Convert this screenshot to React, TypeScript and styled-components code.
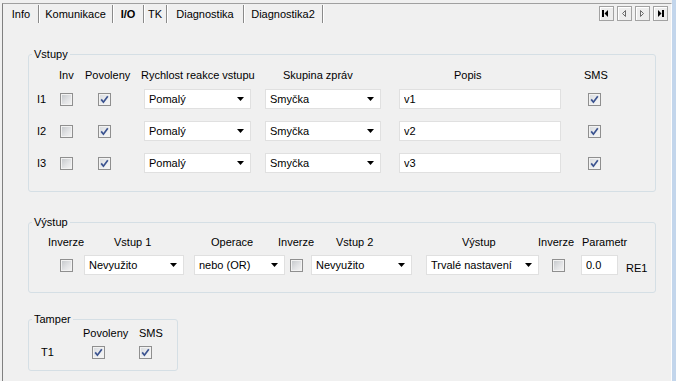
import React from 'react'
import styled, { createGlobalStyle } from 'styled-components'

const GlobalStyle = createGlobalStyle`
  html, body {
    margin: 0;
    padding: 0;
    background: #f0f0f0;
  }
  body {
    font-family: "Liberation Sans", Arial, sans-serif;
    font-size: 11px;
    color: #000;
  }
`

const Window = styled.div`
  display: flex;
  width: 676px;
  height: 381px;
  overflow: hidden;
  background: #f0f0f0;
`

const Frame = styled.div`
  flex: 1;
  display: flex;
  flex-direction: column;
  margin: 3px 0 0 2px;
  border-top: 1px solid #a0a0a0;
  border-left: 1px solid #808080;
  border-right: 1px solid #fdfdfd;
`

const WindowEdge = styled.div`
  width: 4px;
  background: #c3d6ec;
`

const TopBar = styled.div`
  display: flex;
  align-items: flex-start;
  justify-content: space-between;
  height: 19px;
`

const Tabs = styled.div`
  display: flex;
  padding: 1px 0 0 1px;
`

const Tab = styled.div<{ $w: number; $active?: boolean }>`
  box-sizing: border-box;
  width: ${({ $w }) => $w}px;
  height: 18px;
  line-height: 18px;
  text-align: center;
  white-space: nowrap;
  font-weight: ${({ $active }) => ($active ? 'bold' : 'normal')};
  border-right: 1px solid #8a8a8a;
  box-shadow: 1px 0 0 #ffffff;
`

const NavGroup = styled.div`
  display: flex;
  gap: 3px;
  margin: 2px 3px 0 0;
`

const NavButton = styled.div`
  box-sizing: border-box;
  width: 15px;
  height: 15px;
  border: 1px solid #a2a2a2;
  background: #ededed;
  box-shadow: inset 1px 1px 0 #ffffff;

  svg {
    display: block;
  }
`

const Panel = styled.div`
  display: flex;
  flex-direction: column;
  align-items: flex-start;
  padding: 24px 0 0 25px;
`

const Group = styled.fieldset<{ $w: number; $gap?: number }>`
  box-sizing: border-box;
  width: ${({ $w }) => $w}px;
  min-width: 0;
  margin: ${({ $gap }) => $gap || 0}px 0 0 0;
  padding: 0;
  border: 1px solid #d5dfe5;
  border-radius: 3px;
`

const Legend = styled.legend`
  margin-left: 3px;
  padding: 0 2px;
  line-height: 14px;
`

const InputsGrid = styled.div`
  display: grid;
  grid-template-columns: 23px 38px 46px 121px 134px 189px 30px;
  grid-template-rows: 17px repeat(3, 32px);
  align-items: center;
  justify-items: start;
  padding: 5px 0 12px 8px;
`

const OutputGrid = styled.div`
  display: grid;
  grid-template-columns: 24px 110px 96px 21px 115px 126px 29px 45px auto;
  grid-template-rows: 15px 32px;
  align-items: center;
  justify-items: start;
  padding: 5px 0 11px 31px;
`

const TamperGrid = styled.div`
  display: grid;
  grid-template-columns: 51px 47px auto;
  grid-template-rows: 14px 24px;
  align-items: center;
  justify-items: start;
  padding: 0 0 6px 12px;
`

const Head = styled.span<{ $x?: number }>`
  margin-left: ${({ $x }) => $x || 0}px;
  white-space: nowrap;
`

const RowLabel = styled.span`
  white-space: nowrap;
`

const Suffix = styled.span`
  padding: 5px 0 0 0;
  white-space: nowrap;
`

const Box = styled.span<{ $on?: boolean }>`
  display: block;
  box-sizing: border-box;
  width: 13px;
  height: 13px;
  border: 1px solid #8f8f8f;
  background: ${({ $on }) =>
    $on
      ? 'linear-gradient(135deg, #d6d9dd 0%, #eeeff0 60%, #f6f6f6 100%)'
      : 'linear-gradient(135deg, #c2c5c9 0%, #e2e3e5 55%, #f5f5f5 100%)'};
  box-shadow: inset 0 0 0 1px #f2f2f2;

  svg {
    display: block;
  }
`

const ComboBox = styled.div<{ $w: number }>`
  box-sizing: border-box;
  width: ${({ $w }) => $w}px;
  height: 20px;
  display: flex;
  align-items: center;
  justify-content: space-between;
  padding: 0 6px 0 4px;
  background: #ffffff;
  border: 1px solid #e0e0e0;
  white-space: nowrap;

  svg {
    display: block;
    flex: none;
  }
`

const TextBox = styled.input<{ $w: number }>`
  box-sizing: border-box;
  width: ${({ $w }) => $w}px;
  height: 20px;
  margin: 0;
  padding: 0 4px;
  background: #ffffff;
  border: 1px solid #e0e0e0;
  font: inherit;
  color: #000;
  outline: none;
`

function Check({ on }: { on?: boolean }) {
  return (
    <Box $on={on}>
      {on && (
        <svg width="11" height="11" viewBox="0 0 11 11">
          <path d="M2.2 5.4 L4.4 8.2 L8.8 2.2" fill="none" stroke="#3b5390" strokeWidth="1.7" />
        </svg>
      )}
    </Box>
  )
}

function Combo({ w, value }: { w: number; value: string }) {
  return (
    <ComboBox $w={w}>
      <span>{value}</span>
      <svg width="7" height="4" viewBox="0 0 7 4">
        <polygon points="0,0 7,0 3.5,4" fill="#000" />
      </svg>
    </ComboBox>
  )
}

const tabs = [
  { label: 'Info', w: 35 },
  { label: 'Komunikace', w: 74 },
  { label: 'I/O', w: 31, active: true },
  { label: 'TK', w: 23 },
  { label: 'Diagnostika', w: 77 },
  { label: 'Diagnostika2', w: 79 },
]

const inputs = ['1', '2', '3']

export default function App() {
  return (
    <>
      <GlobalStyle />
      <Window>
        <Frame>
          <TopBar>
            <Tabs>
              {tabs.map((t) => (
                <Tab key={t.label} $w={t.w} $active={t.active}>
                  {t.label}
                </Tab>
              ))}
            </Tabs>
            <NavGroup>
              <NavButton>
                <svg width="13" height="13" viewBox="0 0 13 13">
                  <rect x="2" y="3" width="2" height="7" fill="#000" />
                  <polygon points="8,3 8,10 4.5,6.5" fill="#000" />
                </svg>
              </NavButton>
              <NavButton>
                <svg width="13" height="13" viewBox="0 0 13 13">
                  <polygon points="7.5,3.5 7.5,9.5 4.5,6.5" fill="none" stroke="#6a6a6a" strokeWidth="1" />
                </svg>
              </NavButton>
              <NavButton>
                <svg width="13" height="13" viewBox="0 0 13 13">
                  <polygon points="4.5,3.5 4.5,9.5 7.5,6.5" fill="none" stroke="#6a6a6a" strokeWidth="1" />
                </svg>
              </NavButton>
              <NavButton>
                <svg width="13" height="13" viewBox="0 0 13 13">
                  <polygon points="4,3 4,10 7.5,6.5" fill="#000" />
                  <rect x="8" y="3" width="2" height="7" fill="#000" />
                </svg>
              </NavButton>
            </NavGroup>
          </TopBar>

          <Panel>
            <Group $w={628}>
              <Legend>Vstupy</Legend>
              <InputsGrid>
                <span />
                <Head $x={-1}>Inv</Head>
                <Head $x={-13}>Povoleny</Head>
                <Head $x={-3}>Rychlost reakce vstupu</Head>
                <Head $x={18}>Skupina zpráv</Head>
                <Head $x={55}>Popis</Head>
                <Head $x={-4}>SMS</Head>
                {inputs.map((n) => (
                  <React.Fragment key={n}>
                    <RowLabel>I{n}</RowLabel>
                    <Check />
                    <Check on />
                    <Combo w={107} value="Pomalý" />
                    <Combo w={116} value="Smyčka" />
                    <TextBox $w={162} value={'v' + n} readOnly />
                    <Check on />
                  </React.Fragment>
                ))}
              </InputsGrid>
            </Group>

            <Group $w={628} $gap={23}>
              <Legend>Výstup</Legend>
              <OutputGrid>
                <Head $x={-12}>Inverze</Head>
                <Head $x={30}>Vstup 1</Head>
                <Head $x={17}>Operace</Head>
                <Head $x={-12}>Inverze</Head>
                <Head $x={25}>Vstup 2</Head>
                <Head $x={36}>Výstup</Head>
                <Head $x={-14}>Inverze</Head>
                <Head $x={1}>Parametr</Head>
                <span />
                <Check />
                <Combo w={100} value="Nevyužito" />
                <Combo w={91} value="nebo (OR)" />
                <Check />
                <Combo w={101} value="Nevyužito" />
                <Combo w={113} value="Trvalé nastavení" />
                <Check />
                <TextBox $w={37} value="0.0" readOnly />
                <Suffix>RE1</Suffix>
              </OutputGrid>
            </Group>

            <Group $w={150} $gap={19}>
              <Legend>Tamper</Legend>
              <TamperGrid>
                <span />
                <Head $x={-9}>Povoleny</Head>
                <Head>SMS</Head>
                <RowLabel>T1</RowLabel>
                <Check on />
                <Check on />
              </TamperGrid>
            </Group>
          </Panel>
        </Frame>
        <WindowEdge />
      </Window>
    </>
  )
}
